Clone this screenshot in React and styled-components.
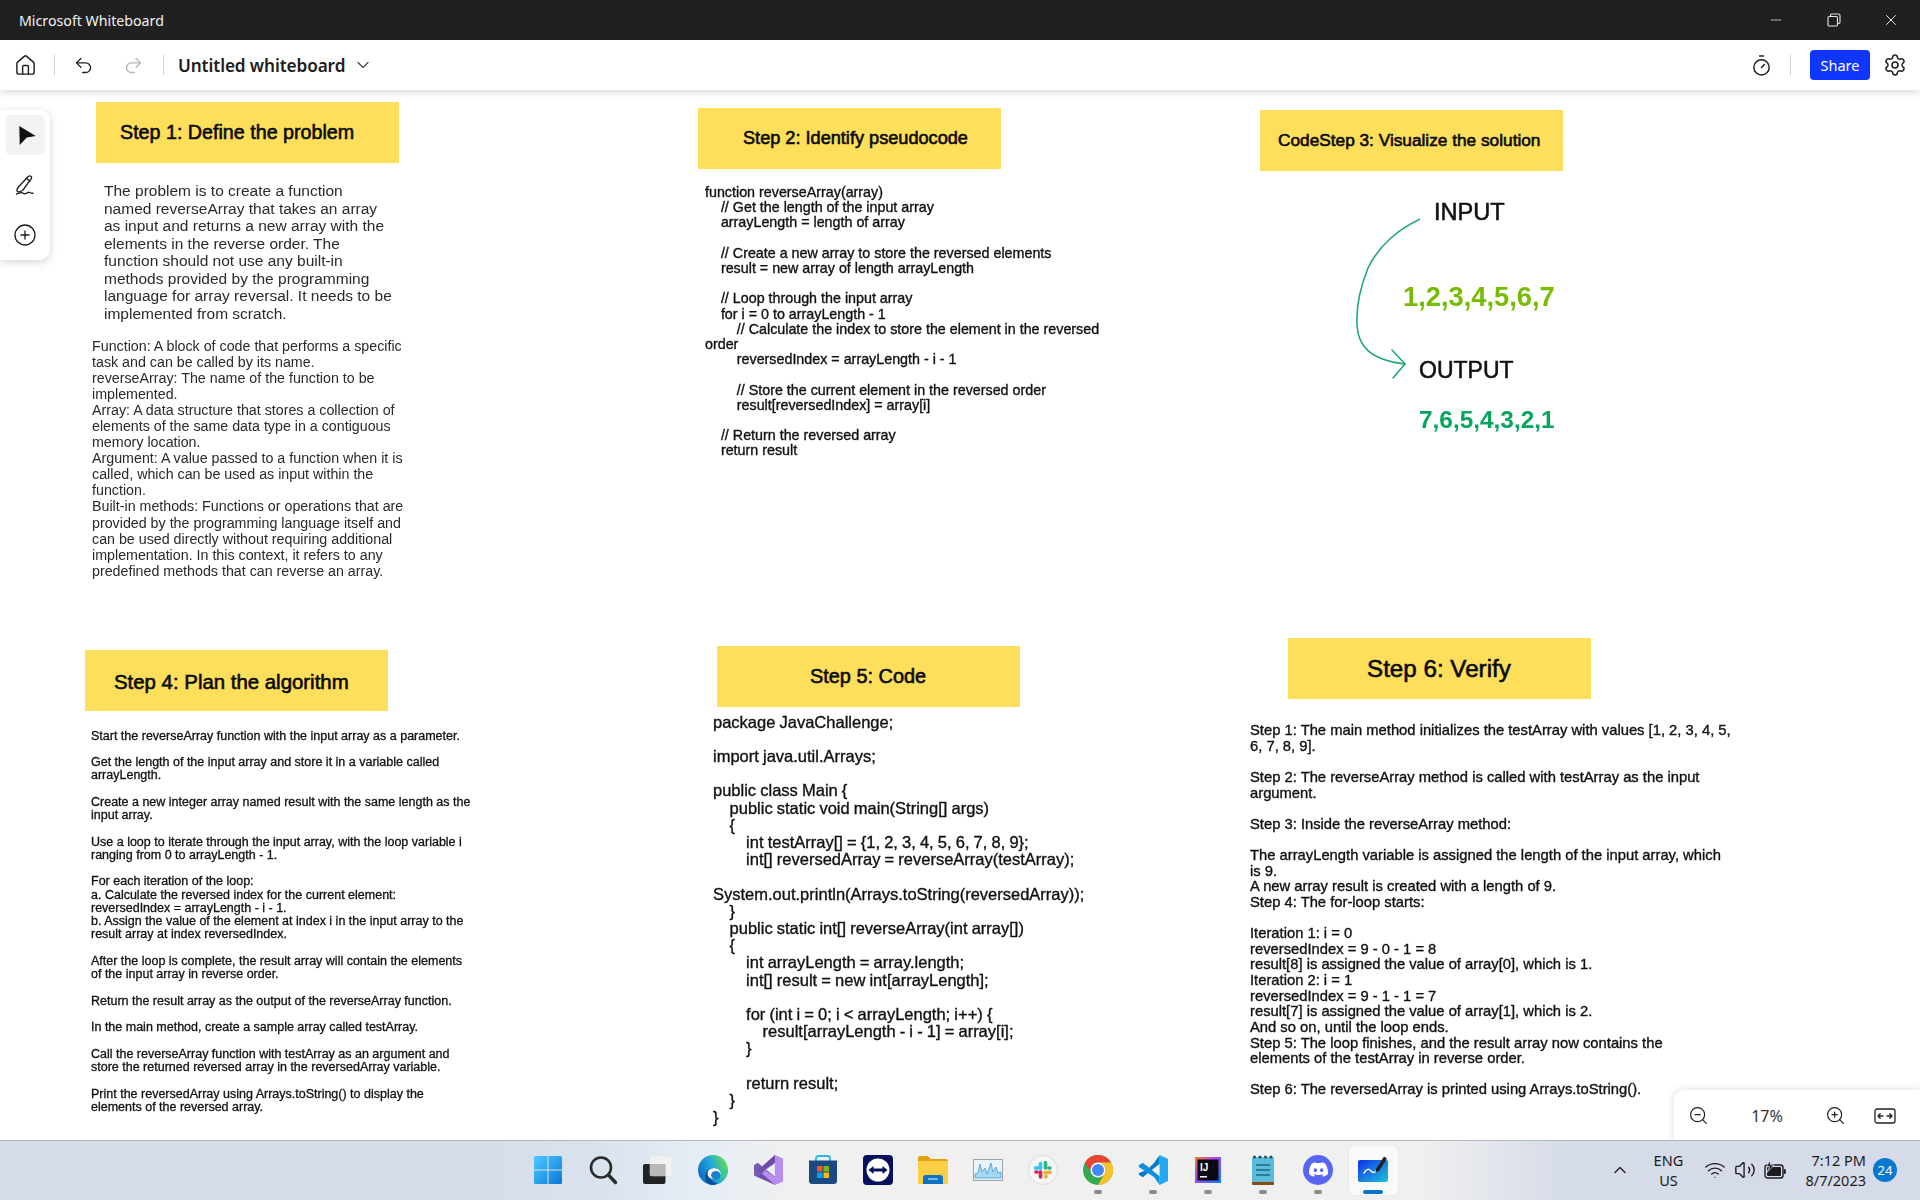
import React from "react";
import styled, { createGlobalStyle } from "styled-components";
import {
  House,
  Undo2,
  Redo2,
  ChevronDown,
  ChevronUp,
  Timer,
  Settings,
  Minus,
  X,
  CirclePlus,
  ZoomIn,
  ZoomOut,
  Wifi,
  Volume2,
} from "lucide-react";
import { SiDiscord } from "react-icons/si";

const ui = '"Noto Sans", "Open Sans", sans-serif';
const board = '"Liberation Sans", Arial, sans-serif';

const GlobalStyle = createGlobalStyle`
  html, body { margin: 0; padding: 0; background: #fff; }
  * { box-sizing: border-box; }
`;

const Page = styled.div`
  width: 1920px;
  height: 1200px;
  display: flex;
  flex-direction: column;
  overflow: hidden;
  font-family: ${ui};
  background: #fff;
`;

const TitleBar = styled.div`
  height: 40px;
  flex: none;
  background: #202020;
  display: flex;
  align-items: center;
  padding-left: 19px;
  color: #f2f2f2;
  font-size: 14.2px;
`;

const WindowControls = styled.div`
  margin-left: auto;
  display: flex;
`;

const WindowButton = styled.div`
  width: 57.5px;
  height: 40px;
  display: flex;
  align-items: center;
  justify-content: center;
  color: ${(p) => p.$color || "#e8e8e8"};
`;

const ToolBar = styled.div`
  height: 50px;
  flex: none;
  background: #fff;
  display: flex;
  align-items: center;
  box-shadow: 0 2px 8px rgba(0, 0, 0, 0.16);
  position: relative;
  z-index: 2;
`;

const ToolButton = styled.div`
  width: 50px;
  height: 50px;
  display: flex;
  align-items: center;
  justify-content: center;
  color: ${(p) => (p.$muted ? "#b4b4b4" : "#1f1f1f")};
`;

const Divider = styled.div`
  width: 1px;
  height: 20px;
  background: #d2d2d2;
  margin-left: ${(p) => p.$left || 4}px;
  margin-right: ${(p) => p.$right || 0}px;
`;

const BoardName = styled.div`
  margin-left: 14px;
  font-size: 17.2px;
  font-weight: 600;
  color: #1c1c1c;
  letter-spacing: -0.1px;
`;

const NameChevron = styled.div`
  margin-left: 8px;
  display: flex;
  color: #444;
`;

const ToolBarRight = styled.div`
  margin-left: auto;
  display: flex;
  align-items: center;
`;

const ShareButton = styled.div`
  margin-left: 19px;
  width: 60px;
  height: 30px;
  border-radius: 4px;
  background: #0f37ff;
  color: #fff;
  font-size: 14.5px;
  display: flex;
  align-items: center;
  justify-content: center;
`;

const Canvas = styled.div`
  flex: 1;
  position: relative;
  background: #fff;
  overflow: hidden;
`;

const SidePanel = styled.div`
  position: absolute;
  left: 0;
  top: 20px;
  width: 50px;
  height: 150px;
  background: #fff;
  border-radius: 0 10px 10px 0;
  box-shadow: 0 2px 8px rgba(0, 0, 0, 0.18);
  display: flex;
  flex-direction: column;
  align-items: center;
  padding-top: 5px;
  gap: 10px;
`;

const SideButton = styled.div`
  width: 40px;
  height: 40px;
  border-radius: 6px;
  background: ${(p) => (p.$active ? "#f3f3f3" : "transparent")};
  display: flex;
  align-items: center;
  justify-content: center;
  color: #1a1a1a;
`;

const StepTitle = styled.div`
  position: absolute;
  left: ${(p) => p.$x}px;
  top: ${(p) => p.$y}px;
  width: 303px;
  height: 61px;
  background: #fedf5b;
  display: flex;
  align-items: center;
  padding-left: ${(p) => p.$pad}px;
  padding-top: ${(p) => p.$top || 0}px;
  font-family: ${board};
  font-size: ${(p) => p.$size}px;
  color: #0a0a0a;
  -webkit-text-stroke: 0.6px #0a0a0a;
  white-space: pre;
`;

const BoardText = styled.div`
  position: absolute;
  left: ${(p) => p.$x}px;
  top: ${(p) => p.$y}px;
  font-family: ${board};
  font-size: ${(p) => p.$size}px;
  line-height: ${(p) => p.$lh}px;
  word-spacing: ${(p) => p.$words || 0}px;
  color: ${(p) => p.$color || "#111"};
  -webkit-text-stroke: ${(p) => p.$stroke || 0}px ${(p) => p.$color || "#111"};
  font-weight: ${(p) => p.$weight || 400};
  white-space: pre;
  filter: blur(0.2px);
`;

const ArrowDrawing = styled.svg`
  position: absolute;
  left: 1340px;
  top: 110px;
`;

const ZoomPanel = styled.div`
  position: absolute;
  right: 0;
  bottom: 0;
  width: 246px;
  height: 50px;
  background: #fff;
  border-radius: 10px 0 0 0;
  box-shadow: 0 0 8px rgba(0, 0, 0, 0.14);
  display: flex;
  align-items: center;
  padding-top: 1px;
  color: #222;
`;

const ZoomIcon = styled.div`
  width: ${(p) => p.$w}px;
  display: flex;
  justify-content: center;
`;

const ZoomValue = styled.div`
  width: 90px;
  text-align: center;
  font-size: 16px;
  color: #333;
`;

const TaskBar = styled.div`
  height: 60px;
  flex: none;
  border-top: 1px solid #b4b7bf;
  display: grid;
  grid-template-columns: 1fr auto 1fr;
  background: linear-gradient(
    90deg,
    #d5dbe8 0,
    #d5dde9 480px,
    #d9e3ee 600px,
    #e6edf5 700px,
    #f0f0f0 800px,
    #f0f0f0 1420px,
    #d5dbe8 1570px,
    #d5dbe8 100%
  );
  position: relative;
  z-index: 3;
`;

const TaskIcons = styled.div`
  grid-column: 2;
  display: flex;
  margin-left: 1px;
`;

const TaskIcon = styled.div`
  position: relative;
  width: 55px;
  height: 59px;
  display: flex;
  align-items: center;
  justify-content: center;
  padding-bottom: 2px;
`;

const ActiveTile = styled.div`
  position: absolute;
  left: 3px;
  top: 5px;
  width: 49px;
  height: 49px;
  border-radius: 5px;
  background: #f9f9f9;
  box-shadow: 0 0 1px rgba(0, 0, 0, 0.2);
`;

const RunningPill = styled.div`
  position: absolute;
  left: 50%;
  bottom: 6px;
  transform: translateX(-50%);
  width: ${(p) => (p.$active ? 20 : 8)}px;
  height: 4px;
  border-radius: 2px;
  background: ${(p) => (p.$active ? "#0078d4" : "#8a8a8a")};
`;

const Tray = styled.div`
  grid-column: 3;
  display: flex;
  align-items: center;
  justify-content: flex-end;
  padding-right: 23px;
  padding-bottom: 2px;
  color: #1c1c1c;
`;

const TrayIcon = styled.div`
  width: 30px;
  display: flex;
  justify-content: center;
`;

const Language = styled.div`
  width: 50px;
  margin: 0 7px 0 8px;
  text-align: center;
  font-size: 14.5px;
  line-height: 20px;
`;

const Clock = styled.div`
  margin-left: 15px;
  text-align: right;
  font-size: 14.5px;
  line-height: 20px;
`;

const Badge = styled.div`
  margin-left: 7px;
  width: 24px;
  height: 24px;
  border-radius: 50%;
  background: #0b78d0;
  color: #fff;
  font-size: 13px;
  display: flex;
  align-items: center;
  justify-content: center;
`;

const step1 = `The problem is to create a function
named reverseArray that takes an array
as input and returns a new array with the
elements in the reverse order. The
function should not use any built-in
methods provided by the programming
language for array reversal. It needs to be
implemented from scratch.`;

const definitions = `Function: A block of code that performs a specific
task and can be called by its name.
reverseArray: The name of the function to be
implemented.
Array: A data structure that stores a collection of
elements of the same data type in a contiguous
memory location.
Argument: A value passed to a function when it is
called, which can be used as input within the
function.
Built-in methods: Functions or operations that are
provided by the programming language itself and
can be used directly without requiring additional
implementation. In this context, it refers to any
predefined methods that can reverse an array.`;

const pseudocode = `function reverseArray(array)
    // Get the length of the input array
    arrayLength = length of array

    // Create a new array to store the reversed elements
    result = new array of length arrayLength

    // Loop through the input array
    for i = 0 to arrayLength - 1
        // Calculate the index to store the element in the reversed
order
        reversedIndex = arrayLength - i - 1

        // Store the current element in the reversed order
        result[reversedIndex] = array[i]

    // Return the reversed array
    return result`;

const algorithm = `Start the reverseArray function with the input array as a parameter.

Get the length of the input array and store it in a variable called
arrayLength.

Create a new integer array named result with the same length as the
input array.

Use a loop to iterate through the input array, with the loop variable i
ranging from 0 to arrayLength - 1.

For each iteration of the loop:
a. Calculate the reversed index for the current element:
reversedIndex = arrayLength - i - 1.
b. Assign the value of the element at index i in the input array to the
result array at index reversedIndex.

After the loop is complete, the result array will contain the elements
of the input array in reverse order.

Return the result array as the output of the reverseArray function.

In the main method, create a sample array called testArray.

Call the reverseArray function with testArray as an argument and
store the returned reversed array in the reversedArray variable.

Print the reversedArray using Arrays.toString() to display the
elements of the reversed array.`;

const javaCode = `package JavaChallenge;

import java.util.Arrays;

public class Main {
    public static void main(String[] args)
    {
        int testArray[] = {1, 2, 3, 4, 5, 6, 7, 8, 9};
        int[] reversedArray = reverseArray(testArray);

System.out.println(Arrays.toString(reversedArray));
    }
    public static int[] reverseArray(int array[])
    {
        int arrayLength = array.length;
        int[] result = new int[arrayLength];

        for (int i = 0; i < arrayLength; i++) {
            result[arrayLength - i - 1] = array[i];
        }

        return result;
    }
}`;

const verify = `Step 1: The main method initializes the testArray with values [1, 2, 3, 4, 5,
6, 7, 8, 9].

Step 2: The reverseArray method is called with testArray as the input
argument.

Step 3: Inside the reverseArray method:

The arrayLength variable is assigned the length of the input array, which
is 9.
A new array result is created with a length of 9.
Step 4: The for-loop starts:

Iteration 1: i = 0
reversedIndex = 9 - 0 - 1 = 8
result[8] is assigned the value of array[0], which is 1.
Iteration 2: i = 1
reversedIndex = 9 - 1 - 1 = 7
result[7] is assigned the value of array[1], which is 2.
And so on, until the loop ends.
Step 5: The loop finishes, and the result array now contains the
elements of the testArray in reverse order.

Step 6: The reversedArray is printed using Arrays.toString().`;

const RestoreIcon = () => (
  <svg width="14" height="14" viewBox="0 0 14 14" fill="none" stroke="currentColor" strokeWidth="1.1">
    <rect x="1" y="3.5" width="9.5" height="9.5" rx="1.2" />
    <path d="M3.5 3.5V2.2C3.5 1.5 4 1 4.7 1h6.6C12.4 1 13 1.6 13 2.7v6.6c0 .7-.5 1.2-1.2 1.2h-1.3" />
  </svg>
);

const CursorIcon = () => (
  <svg width="24" height="24" viewBox="-5.75 -3 24 24">
    <path d="M.5 0 17 10 8 11.5 1 19z" fill="#111" />
  </svg>
);

const PenIcon = () => (
  <svg width="24" height="24" viewBox="0 0 24 24" fill="none" stroke="#1a1a1a" strokeWidth="1.3" strokeLinecap="round" strokeLinejoin="round">
    <path d="M15.5 3.2c1.6-1.1 3.7.4 3 2.2L10 17c-1.5 1.4-4.5 2.6-5.6 1.6S5 14.5 6.3 13z" />
    <path d="M13.5 5.5l3.4 2.6" />
    <path d="M3.5 21c2.2.2 3-1.6 5-1.4s2 1.6 4 1.1c1.6-.4 2-2.2 4-1.2 1 .5 2.4 1 3.5.6" />
  </svg>
);

const FitIcon = () => (
  <svg width="22" height="16" viewBox="0 0 22 16" fill="none" stroke="#222" strokeWidth="1.3" strokeLinecap="round" strokeLinejoin="round">
    <rect x="1" y="1" width="20" height="14" rx="2" />
    <path d="M4 8h5M4 8l2.2-2.2M4 8l2.2 2.2M13 8h5M18 8l-2.2-2.2M18 8l-2.2 2.2" />
  </svg>
);

const BatteryIcon = () => (
  <svg width="22" height="20" viewBox="0 0 22 20">
    <rect x="1" y="5" width="18" height="13" rx="2.5" fill="none" stroke="#1c1c1c" strokeWidth="1.4" />
    <rect x="3" y="7" width="14" height="9" rx="1" fill="#1c1c1c" />
    <rect x="19.8" y="9" width="2" height="5" rx="1" fill="#1c1c1c" />
    <path d="M6 .5 2.5 6.5h3L3 12.5 10 5H6.5z" fill="#1c1c1c" stroke="#d5dbe8" strokeWidth="0.8" />
  </svg>
);

const WindowsLogo = () => (
  <svg width="30" height="30" viewBox="0 0 30 30">
    <defs>
      <linearGradient id="win" x1="0" y1="0" x2="1" y2="1">
        <stop offset="0" stopColor="#4ccbff" />
        <stop offset="1" stopColor="#0a78d6" />
      </linearGradient>
    </defs>
    <path d="M1 2.5Q1 1 2.5 1H14.5V14.5H1zM15.5 1H27.5Q29 1 29 2.5V14.5H15.5zM1 15.5H14.5V29H2.5Q1 29 1 27.5zM15.5 15.5H29V27.5Q29 29 27.5 29H15.5z" fill="url(#win)" />
  </svg>
);

const SearchLogo = () => (
  <svg width="30" height="30" viewBox="0 0 30 30" fill="none" stroke="#2b2b2b">
    <circle cx="13" cy="12.5" r="10" strokeWidth="2.6" />
    <path d="M20.5 20 27.5 27.5" strokeWidth="3.4" strokeLinecap="round" />
  </svg>
);

const TaskViewLogo = () => (
  <svg width="32" height="30" viewBox="0 0 32 30">
    <rect x="1" y="9" width="22.5" height="20" rx="2" fill="#232323" />
    <rect x="8" y="1" width="22" height="20" rx="2" fill="#f3f3f3" fillOpacity="0.8" stroke="#e0e0e0" strokeWidth="0.5" />
    <rect x="8" y="9" width="15.5" height="12" fill="#b9b9b9" />
  </svg>
);

const EdgeLogo = () => (
  <svg width="30" height="30" viewBox="0 0 30 30">
    <defs>
      <linearGradient id="edge" x1="0.05" y1="0.7" x2="0.95" y2="0.3">
        <stop offset="0" stopColor="#0f6fc4" />
        <stop offset="0.5" stopColor="#1fa6de" />
        <stop offset="1" stopColor="#62d95a" />
      </linearGradient>
    </defs>
    <circle cx="15" cy="15" r="15" fill="url(#edge)" />
    <path d="M30 15c0 5-4 7-8 7-5 0-8-2-8-5 0-2 3-2 6-1.5 4 .5 7-1 10-.5z" fill="#37c88f" />
    <path d="M15 30C8 30 6 24 7.5 19c1.5-5 7-7.5 12-5 2 1 2.5 3 1 3.5-3-2-8-.5-8 4 0 3 2.5 6 7 6.5-1.5 1.5-3 2-4.5 2z" fill="#0a4f9c" />
    <ellipse cx="16" cy="18.5" rx="6.5" ry="5.5" fill="#f3f9fd" />
    <ellipse cx="17.8" cy="20.2" rx="4.7" ry="4.3" fill="#1a7fcf" />
  </svg>
);

const VisualStudioLogo = () => (
  <svg width="30" height="30" viewBox="0 0 100 100">
    <path d="M4 34 16 27 73 72V100L4 68z" fill="#6e4ea6" />
    <path d="M4 66V34L16 27 30 38 16 50 30 62 16 74z" fill="#7a5ab5" />
    <path d="M73 0 100 12V88L73 100 30 62 40 50 73 73V27L40 50 30 38z" fill="#b78df0" />
    <path d="M73 0V27L40 50 30 38z" fill="#6e4ea6" />
  </svg>
);

const StoreLogo = () => (
  <svg width="30" height="30" viewBox="0 0 30 30">
    <path d="M8 6V3.5Q8 1 10.5 1H19.5Q22 1 22 3.5V6" fill="none" stroke="#29b4ea" strokeWidth="1.8" />
    <path d="M1 5.5H29V26Q29 29 26 29H4Q1 29 1 26z" fill="#1b4a80" />
    <rect x="9" y="11" width="5.5" height="5.5" fill="#f05a28" />
    <rect x="15.5" y="11" width="5.5" height="5.5" fill="#80b81c" />
    <rect x="9" y="17.5" width="5.5" height="5.5" fill="#06a5ea" />
    <rect x="15.5" y="17.5" width="5.5" height="5.5" fill="#fdb813" />
  </svg>
);

const TeamViewerLogo = () => (
  <svg width="30" height="30" viewBox="0 0 30 30">
    <rect width="30" height="30" rx="4" fill="#06105c" />
    <circle cx="15" cy="15" r="11.5" fill="#fff" />
    <path d="M5.5 15 10.5 11V13.5H19.5V11L24.5 15 19.5 19V16.5H10.5V19z" fill="#06105c" />
  </svg>
);

const FolderLogo = () => (
  <svg width="30" height="28" viewBox="0 0 30 28">
    <path d="M0 2Q0 0 2 0H10L13 3H28Q30 3 30 5V10H0z" fill="#dfa40a" />
    <path d="M0 5H30V28H0z" fill="#fccf46" />
    <path d="M5 28V22Q5 19 8 19H22Q25 19 25 22V28z" fill="#0d72c4" />
    <path d="M10 23H20" stroke="#e8f3fb" strokeWidth="1" />
  </svg>
);

const MonitorLogo = () => (
  <svg width="30" height="22" viewBox="0 0 30 22">
    <rect x="0.5" y="0.5" width="29" height="21" fill="#eaf3fa" stroke="#98a3ad" />
    <path d="M2 19V15L5 14 7 5 9 13 12 9 14 15 18 4 20 13 23 8 25 14 28 13V19z" fill="#a5d6f2" stroke="#4a9ad4" strokeWidth="0.8" />
  </svg>
);

const SlackLogo = () => (
  <svg width="30" height="30" viewBox="0 0 30 30">
    <circle cx="15" cy="15" r="14.5" fill="#f6f6f6" stroke="#dcdcdc" />
    <g strokeWidth="3.6" strokeLinecap="round" fill="none">
      <path d="M12.5 8.5V13.5M7.5 13h4" stroke="#36c5f0" />
      <path d="M17.5 7.5V13M22 13h-1" stroke="#2eb67d" />
      <path d="M22 17.5H17M18 22v-1" stroke="#ecb22e" />
      <path d="M12.5 17V22M8 17h1" stroke="#e01e5a" />
    </g>
  </svg>
);

const ChromeLogo = () => (
  <svg width="30" height="30" viewBox="0 0 30 30">
    <circle cx="15" cy="15" r="15" fill="#34a853" />
    <path d="M15 0A15 15 0 0 1 28 7.5H15A7.5 7.5 0 0 0 8.5 18.75L2 7.5A15 15 0 0 1 15 0z" fill="#ea4335" />
    <path d="M28 7.5A15 15 0 0 1 15 30L21.5 18.75A7.5 7.5 0 0 0 15 7.5z" fill="#fbc02d" />
    <circle cx="15" cy="15" r="7.5" fill="#fff" />
    <circle cx="15" cy="15" r="6" fill="#4285f4" />
  </svg>
);

const VSCodeLogo = () => (
  <svg width="30" height="30" viewBox="0 0 100 100">
    <path d="M72 0 100 13V87L72 100z" fill="#23a9f2" />
    <path d="M72 0V29L16 74 3 66V60L30 50 54 26z" fill="#0a7bc6" />
    <path d="M3 34V40L54 74 72 100V71L16 26z" fill="#0f8fe0" />
  </svg>
);

const IdeaLogo = () => (
  <svg width="26" height="26" viewBox="0 0 26 26">
    <defs>
      <linearGradient id="ij" x1="0" y1="0" x2="1" y2="1">
        <stop offset="0" stopColor="#f97a12" />
        <stop offset="0.4" stopColor="#b345f1" />
        <stop offset="1" stopColor="#087cfa" />
      </linearGradient>
    </defs>
    <rect width="26" height="26" fill="url(#ij)" />
    <rect x="2.5" y="2.5" width="21" height="21" fill="#0a0a12" />
    <text x="5" y="13.5" fontFamily={board} fontWeight="700" fontSize="10" fill="#fff">IJ</text>
    <rect x="5" y="19" width="7" height="1.5" fill="#fff" />
  </svg>
);

const NotepadLogo = () => (
  <svg width="24" height="30" viewBox="0 0 24 30">
    <rect x="1" y="2" width="22" height="26" rx="1.5" fill="#5bbcd9" />
    <path d="M1 27H23V29Q23 30 22 30H2Q1 30 1 29z" fill="#8a4b14" />
    <g fill="#1d4d62">
      <circle cx="3.5" cy="2" r="1.5" />
      <circle cx="9" cy="2" r="1.5" />
      <circle cx="14.5" cy="2" r="1.5" />
      <circle cx="20" cy="2" r="1.5" />
    </g>
    <path d="M5 10H19M5 15H19M5 20H19" stroke="#1a6a8a" strokeWidth="1.6" />
  </svg>
);

const DiscordDisc = styled.div`
  width: 30px;
  height: 30px;
  border-radius: 50%;
  background: #5865f2;
  display: flex;
  align-items: center;
  justify-content: center;
`;

const DiscordLogo = () => (
  <DiscordDisc>
    <SiDiscord size={19} color="#fff" />
  </DiscordDisc>
);

const WhiteboardLogo = () => (
  <svg width="32" height="27" viewBox="0 0 32 27">
    <defs>
      <linearGradient id="wb" x1="0" y1="0" x2="1" y2="1">
        <stop offset="0" stopColor="#1032e8" />
        <stop offset="1" stopColor="#1dc4dc" />
      </linearGradient>
    </defs>
    <rect x="1" y="4" width="30" height="22" rx="2" fill="url(#wb)" />
    <path d="M7 17c3-5 5-4 7-2s4 2 6-1" fill="none" stroke="#fff" strokeWidth="1.5" strokeLinecap="round" />
    <path d="M19 13 27 .5 30 2.5 22 15 18.5 16.5z" fill="#222" />
  </svg>
);

const taskbarApps = [
  { id: "windows", Logo: WindowsLogo },
  { id: "search", Logo: SearchLogo },
  { id: "taskview", Logo: TaskViewLogo },
  { id: "edge", Logo: EdgeLogo },
  { id: "vs", Logo: VisualStudioLogo },
  { id: "store", Logo: StoreLogo },
  { id: "teamviewer", Logo: TeamViewerLogo },
  { id: "folder", Logo: FolderLogo },
  { id: "monitor", Logo: MonitorLogo },
  { id: "slack", Logo: SlackLogo },
  { id: "chrome", Logo: ChromeLogo, running: true },
  { id: "vscode", Logo: VSCodeLogo, running: true },
  { id: "idea", Logo: IdeaLogo, running: true },
  { id: "notepad", Logo: NotepadLogo, running: true },
  { id: "discord", Logo: DiscordLogo, running: true },
  { id: "whiteboard", Logo: WhiteboardLogo, active: true },
];

const AppIconWrap = styled.div`
  position: relative;
  display: flex;
`;

export default function App() {
  return (
    <Page>
      <GlobalStyle />
      <TitleBar>
        Microsoft Whiteboard
        <WindowControls>
          <WindowButton $color="#b5b5b5"><Minus size={16} strokeWidth={1.5} /></WindowButton>
          <WindowButton><RestoreIcon /></WindowButton>
          <WindowButton><X size={18} strokeWidth={1.3} /></WindowButton>
        </WindowControls>
      </TitleBar>

      <ToolBar>
        <ToolButton><House size={23} strokeWidth={1.5} /></ToolButton>
        <Divider $right={3} />
        <ToolButton><Undo2 size={21} strokeWidth={1.5} /></ToolButton>
        <ToolButton $muted><Redo2 size={21} strokeWidth={1.5} /></ToolButton>
        <Divider $left={5} />
        <BoardName>Untitled whiteboard</BoardName>
        <NameChevron><ChevronDown size={20} strokeWidth={1.4} /></NameChevron>
        <ToolBarRight>
          <ToolButton><Timer size={23} strokeWidth={1.5} /></ToolButton>
          <Divider />
          <ShareButton>Share</ShareButton>
          <ToolButton><Settings size={24} strokeWidth={1.5} /></ToolButton>
        </ToolBarRight>
      </ToolBar>

      <Canvas>
        <StepTitle $x={96} $y={12} $pad={24} $size={19.7}>Step 1: Define the problem</StepTitle>
        <BoardText $x={104} $y={92} $size={15.5} $lh={17.5} $color="#2a2a2a">{step1}</BoardText>
        <BoardText $x={92} $y={247.5} $size={14.25} $lh={16.1} $color="#2a2a2a">{definitions}</BoardText>

        <StepTitle $x={698} $y={18} $pad={45} $size={18.15}>Step 2: Identify pseudocode</StepTitle>
        <BoardText $x={705} $y={95} $size={14.3} $lh={15.2} $stroke={0.35}>{pseudocode}</BoardText>

        <StepTitle $x={1260} $y={20} $pad={18} $size={17.25}>CodeStep 3: Visualize the solution</StepTitle>
        <BoardText $x={1434} $y={106} $size={23.6} $lh={32} $stroke={0.55}>INPUT</BoardText>
        <BoardText $x={1403} $y={187} $size={27.3} $lh={40} $weight={700} $color="#76bc00">1,2,3,4,5,6,7</BoardText>
        <BoardText $x={1419} $y={264} $size={23} $lh={32} $stroke={0.55}>OUTPUT</BoardText>
        <BoardText $x={1419} $y={310} $size={24.4} $lh={40} $weight={700} $color="#07a55e">7,6,5,4,3,2,1</BoardText>
        <ArrowDrawing width="80" height="180" viewBox="1340 200 80 180" fill="none" stroke="#1fa971" strokeWidth="1.6" strokeLinecap="round" strokeLinejoin="round">
          <path d="M1425 217C1398 228 1378 247 1368 268C1360 288 1356 308 1357 325C1358 346 1370 360 1405 364" />
          <path d="M1392 350 1405 364 1393 378" />
        </ArrowDrawing>

        <StepTitle $x={85} $y={560} $pad={29} $size={20.4} $top={3}>Step 4: Plan the algorithm</StepTitle>
        <BoardText $x={91} $y={639.5} $size={12.5} $lh={13.27} $stroke={0.3}>{algorithm}</BoardText>

        <StepTitle $x={717} $y={556} $pad={93} $size={19.9}>Step 5: Code</StepTitle>
        <BoardText $x={713} $y={623.5} $size={16.5} $lh={17.2} $stroke={0.35} $words={-0.45}>{javaCode}</BoardText>

        <StepTitle $x={1288} $y={548} $pad={79} $size={24.2}>Step 6: Verify</StepTitle>
        <BoardText $x={1250} $y={633} $size={14.78} $lh={15.62} $stroke={0.35}>{verify}</BoardText>

        <SidePanel>
          <SideButton $active><CursorIcon /></SideButton>
          <SideButton><PenIcon /></SideButton>
          <SideButton><CirclePlus size={24} strokeWidth={1.3} /></SideButton>
        </SidePanel>

        <ZoomPanel>
          <ZoomIcon $w={48}><ZoomOut size={21} strokeWidth={1.4} /></ZoomIcon>
          <ZoomValue>17%</ZoomValue>
          <ZoomIcon $w={46}><ZoomIn size={21} strokeWidth={1.4} /></ZoomIcon>
          <ZoomIcon $w={54}><FitIcon /></ZoomIcon>
        </ZoomPanel>
      </Canvas>

      <TaskBar>
        <TaskIcons>
          {taskbarApps.map(({ id, Logo, running, active }) => (
            <TaskIcon key={id}>
              {active && <ActiveTile />}
              <AppIconWrap><Logo /></AppIconWrap>
              {(running || active) && <RunningPill $active={active} />}
            </TaskIcon>
          ))}
        </TaskIcons>
        <Tray>
          <TrayIcon><ChevronUp size={20} strokeWidth={1.6} /></TrayIcon>
          <Language>ENG<br />US</Language>
          <TrayIcon><Wifi size={22} strokeWidth={1.5} /></TrayIcon>
          <TrayIcon><Volume2 size={22} strokeWidth={1.5} /></TrayIcon>
          <TrayIcon><BatteryIcon /></TrayIcon>
          <Clock>7:12 PM<br />8/7/2023</Clock>
          <Badge>24</Badge>
        </Tray>
      </TaskBar>
    </Page>
  );
}
